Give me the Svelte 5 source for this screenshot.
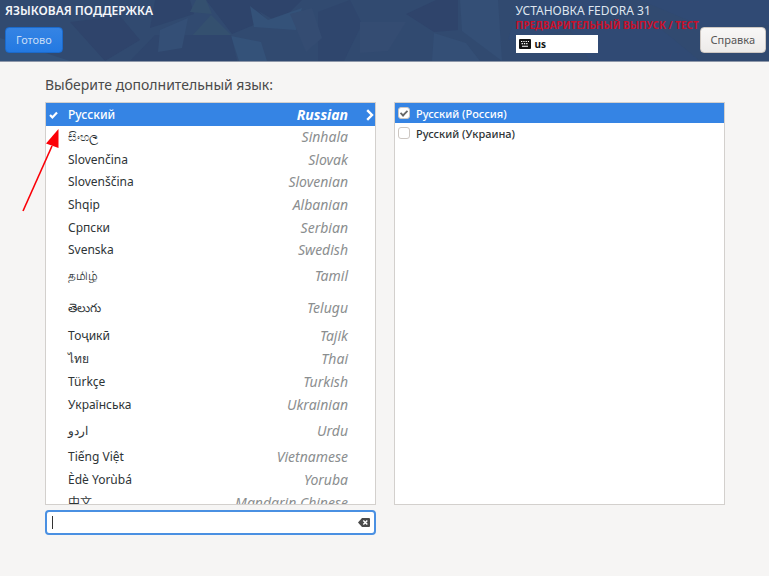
<script>
  let keyboard = 'us'
  let query = ''

  let languages = [
    { native: 'Русский', english: 'Russian', size: 'normal' },
    { native: 'සිංහල', english: 'Sinhala', size: 'short' },
    { native: 'Slovenčina', english: 'Slovak', size: 'normal' },
    { native: 'Slovenščina', english: 'Slovenian', size: 'short' },
    { native: 'Shqip', english: 'Albanian', size: 'normal' },
    { native: 'Српски', english: 'Serbian', size: 'normal' },
    { native: 'Svenska', english: 'Swedish', size: 'short' },
    { native: 'தமிழ்', english: 'Tamil', size: 'tall' },
    { native: 'తెలుగు', english: 'Telugu', size: 'taller' },
    { native: 'Тоҷикӣ', english: 'Tajik', size: 'short' },
    { native: 'ไทย', english: 'Thai', size: 'normal' },
    { native: 'Türkçe', english: 'Turkish', size: 'normal' },
    { native: 'Українська', english: 'Ukrainian', size: 'normal' },
    { native: 'اردو', english: 'Urdu', size: 'tall' },
    { native: 'Tiếng Việt', english: 'Vietnamese', size: 'normal' },
    { native: 'Èdè Yorùbá', english: 'Yoruba', size: 'normal' },
    { native: '中文', english: 'Mandarin Chinese', size: 'normal' }
  ]
  let current = 'Russian'

  let locales = [
    { id: 'ru_RU', name: 'Русский (Россия)', checked: true },
    { id: 'ru_UA', name: 'Русский (Украина)', checked: false }
  ]
  let currentLocale = 'ru_RU'
</script>

<div class="page">
  <header class="topbar">
    <svg class="mosaic" viewBox="0 0 769 61" preserveAspectRatio="none" aria-hidden="true">
      <path fill="#2e446b" d="M155 0h35l4 14-44 14zM206 0h44l16 20-34 14zM250 0h52l-14 14-14 6-24-14z" />
      <path fill="#34506f" d="M196 0h10l6 14-22-2zM211 15l20 20-40 2z" />
      <path fill="#345279" d="M250 6l18 14 34-12-6 22-42-3zM0 38l70 23H0zM231 36l30 6 6 19h-28z" />
      <path fill="#2f466d" d="M130 61l25-26 76 0 6 26zM318 12l32-12 12 24-18 37h-26z" />
      <path fill="#344f76" d="M434 33l32 10 14 18h-48zM460 0h38l4 61-40-30zM160 30l28-12-6 30-24 4z" />
      <path fill="#344c72" d="M360 22l46 0-18 29-28 2zM290 14l22-6 10 30-16 14z" />
      <path fill="#2f446b" d="M406 14l30-14 22 0 0 30-24 2zM70 22l50-6 20 24-35 21z" />
      <path fill="#304a74" d="M520 0h90l-40 30-62 10zM640 0h129v25l-60 4zM570 30l80-10 50 41H590z" />
    </svg>
    <div class="side">
      <h1>ЯЗЫКОВАЯ ПОДДЕРЖКА</h1>
      <button class="btn primary">Готово</button>
    </div>
    <div class="product">
      <div class="release">УСТАНОВКА FEDORA 31</div>
      <div class="prerelease">ПРЕДВАРИТЕЛЬНЫЙ ВЫПУСК / ТЕСТ</div>
      <button class="layout">
        <svg width="12" height="10" viewBox="0 0 12 10" aria-hidden="true">
          <rect width="12" height="10" rx="1" fill="#111" />
          <path d="M2 2.5h1.3m1 0h1.3m1 0h1.3m1 0H10M2.6 4.6h1.3m1 0h1.3m1 0h1.3M3 7.3h6" stroke="#fff" stroke-width="1.1" fill="none" />
        </svg>
        {keyboard}
      </button>
    </div>
    <button class="btn help">Справка</button>
  </header>

  <main>
    <h2>Выберите дополнительный язык:</h2>
    <div class="columns">
      <div class="column">
        <div class="list">
          {#each languages as lang}
            <button
              class="lang {lang.size}"
              class:selected={lang.english === current}
              on:click={() => (current = lang.english)}
            >
              <span class="mark">
                {#if lang.english === current}
                  <svg width="9" height="8" viewBox="0 0 9 8" aria-hidden="true">
                    <path d="M1 4l2.4 2.4L8 1.4" fill="none" stroke="#fff" stroke-width="2.2" />
                  </svg>
                {/if}
              </span>
              <span class="native">{lang.native}</span>
              <span class="english">{lang.english}</span>
              <span class="more">
                {#if lang.english === current}
                  <svg width="8" height="12" viewBox="0 0 8 12" aria-hidden="true">
                    <path d="M1.2 1.2L6 6l-4.8 4.8" fill="none" stroke="#fff" stroke-width="2.4" />
                  </svg>
                {/if}
              </span>
            </button>
          {/each}
        </div>
        <div class="search">
          <span class="caret"></span>
          <input type="text" aria-label="Поиск" bind:value={query} />
          <button class="clear" aria-label="Очистить" on:click={() => (query = '')}>
            <svg width="12" height="9" viewBox="0 0 12 9" aria-hidden="true">
              <path d="M4 0h7q1 0 1 1v7q0 1-1 1H4L0 4.5z" fill="#4a4a4a" />
              <path d="M5.3 2.5l4 4m0-4l-4 4" stroke="#fff" stroke-width="1.5" />
            </svg>
          </button>
        </div>
      </div>

      <div class="column">
        <div class="list locales">
          {#each locales as locale}
            <label class="locale" class:selected={locale.id === currentLocale}>
              <input type="checkbox" bind:checked={locale.checked} />
              {locale.name}
            </label>
          {/each}
        </div>
      </div>
    </div>
  </main>

  <svg class="pointer" width="40" height="86" viewBox="0 0 40 86" aria-hidden="true">
    <path d="M3 83L32 18" stroke="#fb0007" stroke-width="1.6" />
    <path d="M38.500 1L26 15.500l12.500 4.500z" fill="#fb0007" />
  </svg>
</div>

<style>
  :global(body) {
    margin: 0;
    background: #f6f5f4;
  }

  .page {
    position: relative;
    display: flex;
    flex-direction: column;
    height: 100vh;
    min-height: 320px;
    box-sizing: border-box;
    color: #2e3436;
    font-family: 'Noto Sans', 'Noto Sans CJK SC', sans-serif;
    font-size: 12px;
  }

  button,
  input {
    font: inherit;
    color: inherit;
  }

  .topbar {
    position: relative;
    display: flex;
    align-items: flex-start;
    height: 62px;
    flex-shrink: 0;
    padding: 0 3px 0 5px;
    box-sizing: border-box;
    background: #314a70;
    border-bottom: 1px solid #8d97a9;
  }

  .mosaic {
    position: absolute;
    top: 0;
    left: 0;
    width: 100%;
    height: 100%;
  }

  .side {
    position: relative;
    flex: 1;
  }

  h1 {
    margin: 2px 0 8px;
    font-size: 12px;
    line-height: 17px;
    font-weight: 600;
    color: #f4f6fa;
  }

  .btn {
    height: 26px;
    padding: 0 10px;
    border: 1px solid #cdc7c2;
    border-radius: 4px;
    font-size: 11px;
    line-height: 16px;
    cursor: pointer;
  }

  .primary {
    border-color: #1b6acb;
    background: linear-gradient(#3584e4, #2379e2);
    color: #c6dcf7;
  }

  .help {
    position: relative;
    margin-top: 27px;
    background: linear-gradient(#f8f7f6, #edebe9);
    color: #555;
  }

  .product {
    position: relative;
    width: 184px;
  }

  .release {
    padding-top: 2px;
    font-size: 12px;
    line-height: 17px;
    color: #dfe5ee;
  }

  .prerelease {
    font-size: 10px;
    line-height: 12px;
    font-weight: 700;
    color: #c8102a;
    white-space: nowrap;
  }

  .layout {
    display: flex;
    align-items: center;
    gap: 4px;
    width: 82px;
    height: 18px;
    margin-top: 4px;
    padding: 0 3px;
    border: none;
    background: #fff;
    color: #111;
    font-size: 10px;
    font-weight: 700;
  }

  main {
    display: flex;
    flex-direction: column;
    flex: 1;
    min-height: 0;
    padding: 13px 44px 41px 45px;
  }

  h2 {
    margin: 0 0 7px;
    font-size: 14px;
    line-height: 20px;
    font-weight: 400;
    color: #4a4a4a;
  }

  .columns {
    display: grid;
    grid-template-columns: 1fr 1fr;
    grid-template-rows: minmax(0, 1fr);
    gap: 18px;
    flex: 1;
    min-height: 0;
  }

  .column {
    display: flex;
    flex-direction: column;
    gap: 5px;
    min-height: 0;
  }

  .list {
    flex: 1;
    min-height: 0;
    overflow: hidden;
    border: 1px solid #d3d0cd;
    background: #fff;
  }

  .locales {
    margin-bottom: 30px;
  }

  .lang {
    display: flex;
    align-items: center;
    width: 100%;
    height: 23px;
    padding: 0;
    border: none;
    background: none;
    text-align: left;
  }

  .short {
    height: 22px;
  }

  .tall {
    height: 29px;
  }

  .taller {
    height: 35px;
  }

  .mark {
    display: flex;
    width: 22px;
    padding-left: 3px;
    box-sizing: border-box;
  }

  .native {
    flex: 1;
    font-size: 12px;
    line-height: 18px;
  }

  .english {
    font-size: 14px;
    line-height: 18px;
    font-style: italic;
    color: #8b8e8f;
  }

  .more {
    display: flex;
    justify-content: flex-end;
    width: 27px;
    padding-right: 1px;
    box-sizing: border-box;
  }

  .selected {
    background: #3584e4;
    color: #fff;
    font-weight: 500;
  }

  .selected .english {
    color: #fff;
    font-weight: 700;
  }

  .search {
    display: flex;
    align-items: center;
    height: 25px;
    flex-shrink: 0;
    padding: 0 4px 0 5px;
    border: 2px solid #4a90e2;
    border-radius: 4px;
    box-sizing: border-box;
    background: #fff;
  }

  .caret {
    width: 1px;
    height: 13px;
    background: #333;
  }

  .search input {
    flex: 1;
    min-width: 0;
    padding: 0;
    border: none;
    outline: none;
    background: none;
    caret-color: transparent;
  }

  .clear {
    display: flex;
    padding: 0;
    border: none;
    background: none;
  }

  .locale {
    display: flex;
    align-items: center;
    gap: 6px;
    height: 20px;
    padding-left: 3px;
    font-size: 11px;
    font-weight: 500;
  }

  .locale input {
    appearance: none;
    width: 12px;
    height: 12px;
    margin: 0;
    border: 1px solid #cdc7c2;
    border-radius: 3px;
    background: #fff;
  }

  .locale input:checked::after {
    content: '';
    display: block;
    width: 6px;
    height: 3px;
    margin: 2px 0 0 1px;
    border: solid #666;
    border-width: 0 0 2px 2px;
    box-sizing: content-box;
    transform: rotate(-45deg) scale(0.9);
  }

  .pointer {
    position: absolute;
    top: 128px;
    left: 20px;
  }
</style>
